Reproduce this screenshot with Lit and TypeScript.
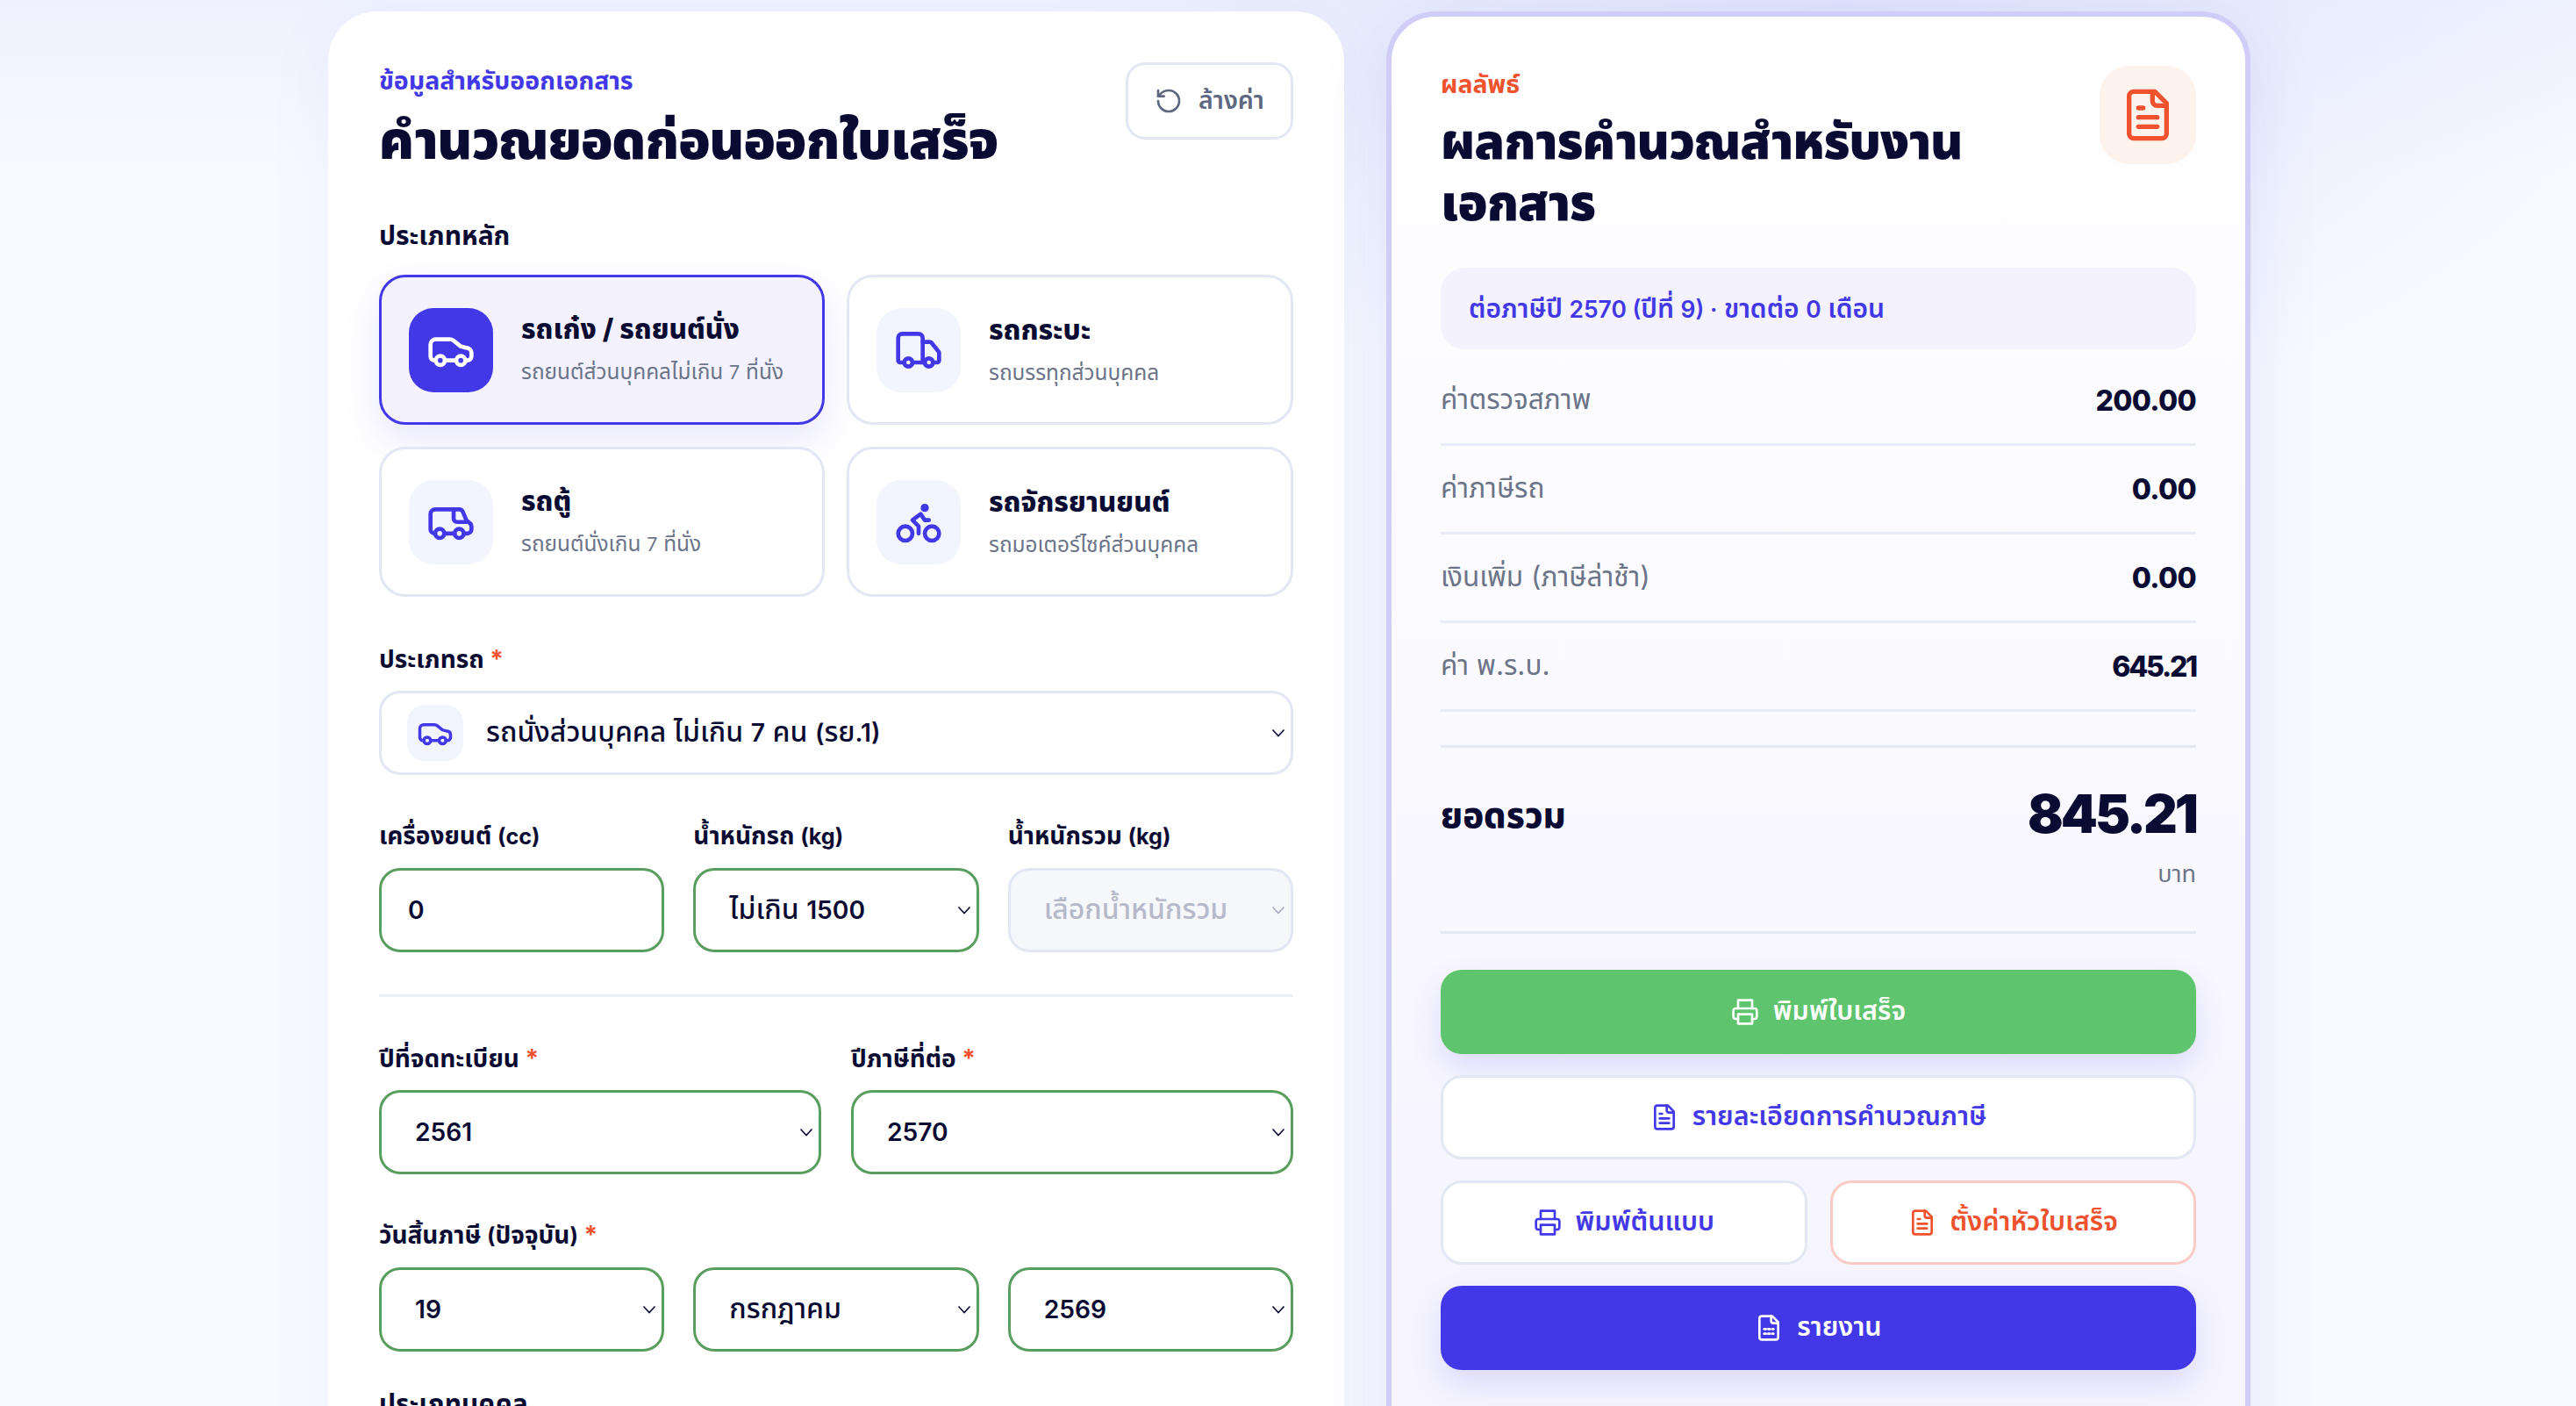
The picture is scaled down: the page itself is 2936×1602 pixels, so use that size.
import { LitElement, html, css, svg } from "lit";
import { customElement } from "lit/decorators.js";

const ic = (body: unknown) => html`<svg class="ic" viewBox="0 0 24 24" fill="none" stroke="currentColor" stroke-width="2" stroke-linecap="round" stroke-linejoin="round">${body}</svg>`;
const n = (s: string) => html`<span class="num">${s}</span>`;

const car = svg`<path d="M4.6 17H4a2 2 0 0 1-2-2V9.2A2.5 2.5 0 0 1 4.5 6.7h7a3 3 0 0 1 2 .8l3.2 2.6 3 .8A2.5 2.5 0 0 1 22 13.2V15a2 2 0 0 1-2 2h-1"/><path d="M9 17h5.5"/><circle cx="6.8" cy="17" r="2.2"/><circle cx="16.8" cy="17" r="2.2"/>`;
const van = svg`<path d="M4 17.5a2 2 0 0 1-2-2V8a2.3 2.3 0 0 1 2.3-2.3H16a2 2 0 0 1 1.8 1.2l1.8 4.3 1.4 1.1a2.5 2.5 0 0 1 1 2v1.2a2 2 0 0 1-2 2h-1.7"/><path d="M13.3 5.7v4.6a1.6 1.6 0 0 0 1.6 1.6h4.8"/><path d="M8.7 17.5h5"/><circle cx="6.5" cy="17.5" r="2.2"/><circle cx="16" cy="17.5" r="2.2"/>`;
const truck = svg`<path d="M14 18V6a2 2 0 0 0-2-2H4a2 2 0 0 0-2 2v11a1 1 0 0 0 1 1h2"/><path d="M15 18H9"/><path d="M19 18h2a1 1 0 0 0 1-1v-3.65a1 1 0 0 0-.22-.624l-3.48-4.35A1 1 0 0 0 17.52 8H14"/><circle cx="17" cy="18" r="2"/><circle cx="7" cy="18" r="2"/>`;
const bike = svg`<circle cx="18.5" cy="17.5" r="3.5"/><circle cx="5.5" cy="17.5" r="3.5"/><circle cx="15" cy="5" r="1"/><path d="M12 17.5V14l-3-3 4-3 2 3h2"/>`;
const reset = svg`<path d="M3 12a9 9 0 1 0 9-9 9.75 9.75 0 0 0-6.74 2.74L3 8"/><path d="M3 3v5h5"/>`;
const printer = svg`<path d="M6 9V2h12v7"/><path d="M6 18H4a2 2 0 0 1-2-2v-5a2 2 0 0 1 2-2h16a2 2 0 0 1 2 2v5a2 2 0 0 1-2 2h-2"/><rect x="6" y="14" width="12" height="8"/>`;
const fileText = svg`<path d="M15 2H6a2 2 0 0 0-2 2v16a2 2 0 0 0 2 2h12a2 2 0 0 0 2-2V7Z"/><path d="M14 2v4a2 2 0 0 0 2 2h4"/><path d="M10 9H8"/><path d="M16 13H8"/><path d="M16 17H8"/>`;
const fileCalc = svg`<path d="M15 2H6a2 2 0 0 0-2 2v16a2 2 0 0 0 2 2h12a2 2 0 0 0 2-2V7Z"/><path d="M14 2v4a2 2 0 0 0 2 2h4"/><path d="M8 13h1.5"/><path d="M11.5 13h1.5"/><path d="M15 13h1"/><path d="M8 17h1.5"/><path d="M11.5 17h1.5"/><path d="M15 17h1"/>`;

const chevron = html`<svg class="chev" viewBox="0 0 16 10" fill="none" stroke="currentColor" stroke-width="1.6"><path d="M1.5 1.5 8 8.5l6.5-7"/></svg>`;

const types = [
  { t: html`รถเก๋ง / รถยนต์นั่ง`, s: html`รถยนต์ส่วนบุคคลไม่เกิน ${n("7")} ที่นั่ง`, i: car, on: true },
  { t: html`รถกระบะ`, s: html`รถบรรทุกส่วนบุคคล`, i: truck, on: false },
  { t: html`รถตู้`, s: html`รถยนต์นั่งเกิน ${n("7")} ที่นั่ง`, i: van, on: false },
  { t: html`รถจักรยานยนต์`, s: html`รถมอเตอร์ไซค์ส่วนบุคคล`, i: bike, on: false },
];

const rows = [
  { k: "ค่าตรวจสภาพ", v: "200.00", c: "" },
  { k: "ค่าภาษีรถ", v: "0.00", c: "" },
  { k: "เงินเพิ่ม (ภาษีล่าช้า)", v: "0.00", c: "" },
  { k: "ค่า พ.ร.บ.", v: "645.21", c: "tight" },
];

@customElement("app-root")
export class AppRoot extends LitElement {
  static styles = css`
    :host {
      display: block;
      height: 1602px;
      overflow: hidden;
      font-family: "Inter", "Noto Sans Thai", "Noto Sans", "Liberation Sans", sans-serif;
      color: #0a0b33;
      background:
        radial-gradient(900px 500px at 2100px 0, #dfe3fa 0, rgba(223, 227, 250, 0) 100%),
        linear-gradient(180deg, #eff2fe 0, #f7faff 200px, #f7faff 100%);
    }
    * { box-sizing: border-box; }
    .page {
      display: flex;
      align-items: flex-start;
      gap: 48px;
      padding: 13px 0 0 374px;
    }
    .ic { display: block; flex: none; }
    .num { font-size: 0.88em; }
    .form {
      flex: none;
      width: 1158px;
      min-height: 1700px;
      background: #fff;
      border-radius: 56px;
      padding: 58px;
      box-shadow: 0 10px 70px rgba(120, 130, 210, 0.08);
    }
    .head { display: flex; justify-content: space-between; align-items: flex-start; }
    .eyebrow { font-size: 28.5px; line-height: 42px; margin-bottom: 11px; font-weight: 700; color: #4338e8; }
    .orange { color: #f0522e; }
    h1 { margin: 0; font-size: 60px; line-height: 70px; font-weight: 900; letter-spacing: -0.015em; color: #0a0b33; }
    .reset {
      display: flex; align-items: center; justify-content: center; gap: 18px;
      width: 191px; height: 88px; border: 3px solid #e3e7f3; border-radius: 22px;
      background: #fff; color: #5d6780; font: inherit; font-size: 28.5px; font-weight: 600;
    }
    .reset .ic { width: 32px; height: 32px; }
    .label { font-size: 30px; line-height: 40px; font-weight: 700; color: #0a0b33; }
    .req { color: #f0522e; }
    .types {
      display: grid; grid-template-columns: 508px 509px; gap: 25px;
      margin-top: 25px;
    }
    .type {
      display: flex; align-items: center; gap: 32px; height: 171px; padding: 0 31px;
      border: 3px solid #e3e7f3; border-radius: 30px; background: #fff;
    }
    .type.on {
      border-color: #4338e8; background: #f3f2fe;
      box-shadow: 0 18px 44px rgba(67, 56, 232, 0.12);
    }
    .tile {
      width: 96px; height: 96px; border-radius: 28px; flex: none;
      display: flex; align-items: center; justify-content: center;
      background: #f3f5fe; color: #4338e8;
    }
    .tile .ic { width: 56px; height: 56px; }
    .on .tile { background: #4338e8; color: #fff; }
    .tt { font-size: 31.5px; line-height: 44px; margin-top: -2px; font-weight: 800; white-space: nowrap; }
    .ts { font-size: 24.4px; line-height: 36px; color: #6b7488; margin-top: 8px; white-space: nowrap; }
    .group { margin-top: 22px; }
    .gridlabel { margin-bottom: 16px; font-size: 28px; }
    .gridlabel .num { font-size: 0.9em; }
    .field {
      position: relative; display: flex; align-items: center; white-space: pre;
      height: 96px; padding: 0 30px; border: 3px solid #5a9e5f; border-radius: 24px;
      background: #fdfefd; font-size: 32px; font-weight: 500; color: #0a0b33;
    }
    .field .num { font-weight: 600; }
    .field.sel { padding-left: 38px; }
    .field.plain { border-color: #e3e7f3; background: #fff; padding-left: 29px; }
    .field.off { border-color: #e3e7f3; background: #f6f7fb; color: #b5b9c9; }
    .chev {
      position: absolute; right: 6px; top: 50%; width: 16px; height: 10px; margin-top: -5px; color: #0a0b33;
    }
    .off .chev { color: #a8adbf; }
    .mini {
      width: 64px; height: 64px; border-radius: 20px; background: #f3f5fe; color: #4338e8; margin-right: 26px;
      display: flex; align-items: center; justify-content: center; flex: none;
    }
    .mini .ic { width: 42px; height: 42px; }
    .three { display: grid; grid-template-columns: repeat(3, 1fr); column-gap: 33px; }
    .two { display: grid; grid-template-columns: repeat(2, 1fr); column-gap: 34px; }
    hr { border: 0; height: 3px; background: #eef0f7; margin: 0; }

    .result {
      flex: none;
      width: 985px;
      min-height: 1700px;
      border: 6px solid #d0cdf9;
      border-radius: 56px;
      padding: 56px;
      background: linear-gradient(180deg, #fff 0, #f6f5fe 1400px);
      box-shadow: 0 20px 80px rgba(90, 90, 220, 0.12);
    }
    .rhead { display: flex; justify-content: space-between; align-items: flex-start; }
    .rtitle { width: 640px; }
    .rtitle .eyebrow { margin-bottom: 9px; }
    .rtitle h1 { font-size: 56px; }
    .bigicon {
      width: 110px; height: 112px; border-radius: 34px; background: #fdf2ec; color: #f0522e;
      display: flex; align-items: center; justify-content: center; flex: none;
    }
    .bigicon .ic { width: 64px; height: 64px; }
    .banner {
      height: 93px; margin-top: 39px; padding: 2px 32px 0; border-radius: 28px; background: #f3f2fe; color: #4338e8;
      display: flex; align-items: center; font-size: 30px; font-weight: 600; white-space: pre;
    }
    .rows { margin-top: 9px; }
    .row {
      display: flex; justify-content: space-between; align-items: center;
      height: 101px; border-bottom: 3px solid #e9ecf6;
    }
    .row .k { font-size: 31.5px; color: #6b7488; }
    .row .v { font-size: 32px; font-weight: 800; letter-spacing: -0.02em; }
    .row .v.tight { letter-spacing: -0.07em; }
    .total {
      display: flex; justify-content: space-between; align-items: flex-start;
      margin-top: 38px; height: 215px; padding-top: 40px;
      border-top: 3px solid #e6e9f5; border-bottom: 3px solid #e6e9f5;
    }
    .tl { font-size: 40px; line-height: 70px; padding-top: 2px; font-weight: 800; }
    .tr { text-align: right; }
    .amount { font-size: 60px; line-height: 70px; font-weight: 900; letter-spacing: -0.05em; }
    .unit { font-size: 27px; line-height: 40px; color: #6b7488; margin-top: 14px; }
    .actions { display: grid; grid-template-columns: repeat(2, 1fr); gap: 24.5px 26px; margin-top: 41px; }
    .btn {
      display: flex; align-items: center; justify-content: center; gap: 16px;
      height: 95.5px; border-radius: 24px; font: inherit; font-size: 30.5px; font-weight: 600;
      background: #fff; border: 3px solid #e3e7f3; color: #4338e8;
    }
    .btn .ic { width: 32px; height: 32px; }
    .wide { grid-column: 1 / 3; }
    .green { background: #5ec46e; border: 0; color: #fff; box-shadow: 0 16px 36px rgba(67, 56, 232, 0.14); }
    .blue { background: #4338e8; border: 0; color: #fff; box-shadow: 0 16px 36px rgba(67, 56, 232, 0.14); }
    .warn { border-color: #f9cbc4; color: #f0522e; }
  `;

  private field(value: unknown, cls = "sel", arrow = true) {
    return html`<div class="field ${cls}">${value}${arrow ? chevron : ""}</div>`;
  }

  render() {
    return html`<div class="page">
      <section class="form">
        <div class="head">
          <div>
            <div class="eyebrow">ข้อมูลสำหรับออกเอกสาร</div>
            <h1>คำนวณยอดก่อนออกใบเสร็จ</h1>
          </div>
          <button class="reset">${ic(reset)}ล้างค่า</button>
        </div>
        <div class="group" style="margin-top:54px">
          <div class="label">ประเภทหลัก</div>
          <div class="types">
            ${types.map(
              (x) => html`<div class="type ${x.on ? "on" : ""}">
                <div class="tile">${ic(x.i)}</div>
                <div><div class="tt">${x.t}</div><div class="ts">${x.s}</div></div>
              </div>`
            )}
          </div>
        </div>
        <div class="group" style="margin-top:51px">
          <div class="label gridlabel">ประเภทรถ <span class="req">*</span></div>
          <div class="field plain"><div class="mini">${ic(car)}</div><span>รถนั่งส่วนบุคคล ไม่เกิน ${n("7")} คน ${n("(")}รย${n(".1)")}</span>${chevron}</div>
        </div>
        <div class="three group" style="margin-top:49px">
          <div class="label gridlabel">เครื่องยนต์ ${n("(cc)")}</div>
          <div class="label gridlabel">น้ำหนักรถ ${n("(kg)")}</div>
          <div class="label gridlabel">น้ำหนักรวม ${n("(kg)")}</div>
          ${this.field(n("0"), "", false)}
          ${this.field(html`<span>ไม่เกิน ${n("1500")}</span>`)}
          ${this.field("เลือกน้ำหนักรวม", "sel off")}
        </div>
        <hr style="margin-top:48px" />
        <div class="two group" style="margin-top:50px">
          <div class="label gridlabel">ปีที่จดทะเบียน <span class="req">*</span></div>
          <div class="label gridlabel">ปีภาษีที่ต่อ <span class="req">*</span></div>
          ${this.field(n("2561"))}
          ${this.field(n("2570"))}
        </div>
        <div class="group" style="margin-top:49px">
          <div class="label gridlabel">วันสิ้นภาษี ${n("(")}ปัจจุบัน${n(")")} <span class="req">*</span></div>
          <div class="three">
            ${this.field(n("19"))}
            ${this.field("กรกฎาคม")}
            ${this.field(n("2569"))}
          </div>
        </div>
        <div class="group" style="margin-top:39px">
          <div class="label">ประเภทบุคคล</div>
        </div>
      </section>

      <aside class="result">
        <div class="rhead">
          <div class="rtitle">
            <div class="eyebrow orange">ผลลัพธ์</div>
            <h1>ผลการคำนวณสำหรับงานเอกสาร</h1>
          </div>
          <div class="bigicon">${ic(fileText)}</div>
        </div>
        <div class="banner"><span>ต่อภาษีปี ${n("2570 (")}ปีที่ ${n("9) ·")} ขาดต่อ ${n("0")} เดือน</span></div>
        <div class="rows">
          ${rows.map((r) => html`<div class="row"><span class="k">${r.k}</span><span class="v ${r.c}">${r.v}</span></div>`)}
        </div>
        <div class="total">
          <div class="tl">ยอดรวม</div>
          <div class="tr"><div class="amount">845.21</div><div class="unit">บาท</div></div>
        </div>
        <div class="actions">
          <button class="btn wide green">${ic(printer)}พิมพ์ใบเสร็จ</button>
          <button class="btn wide">${ic(fileText)}รายละเอียดการคำนวณภาษี</button>
          <button class="btn">${ic(printer)}พิมพ์ต้นแบบ</button>
          <button class="btn warn">${ic(fileText)}ตั้งค่าหัวใบเสร็จ</button>
          <button class="btn wide blue">${ic(fileCalc)}รายงาน</button>
        </div>
      </aside>
    </div>`;
  }
}
